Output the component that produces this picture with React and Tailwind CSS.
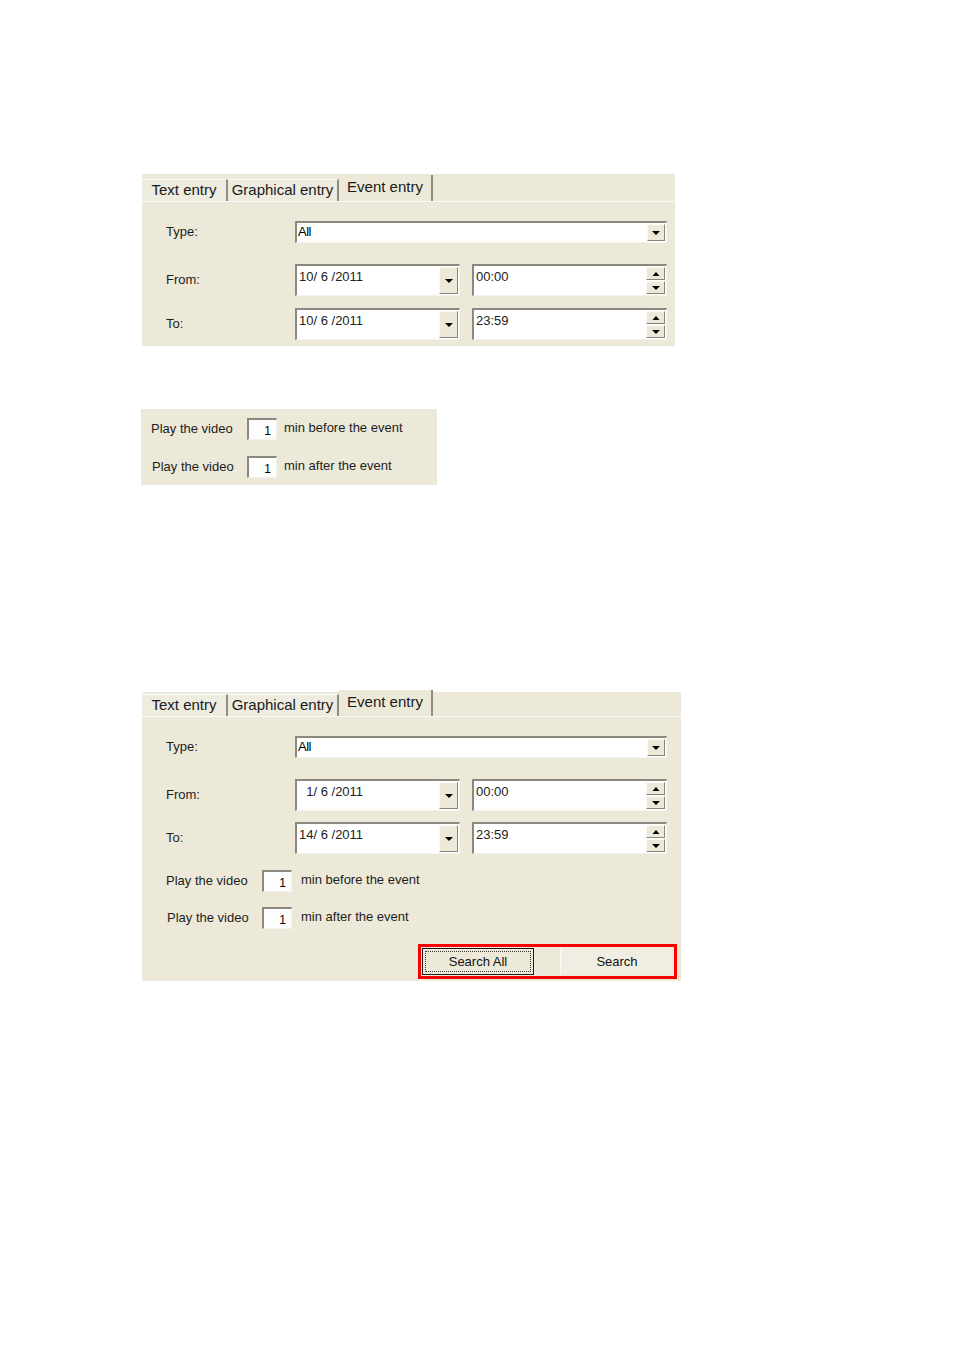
import React from 'react';

const font = { fontFamily: '"Liberation Sans", Arial, sans-serif' };

const Arrow = ({ up = false }) => (
    <svg width="8" height="4" viewBox="0 0 8 4" className="block">
        {up ? <polygon points="0.5,4 7.5,4 4,0" fill="#000" /> : <polygon points="0,0 8,0 4,4" fill="#000" />}
    </svg>
);

// raised little button, XP classic look
const RaisedBtn = ({ children, className = '' }) => (
    <div className={`flex items-center justify-center bg-[#ECE9D8] border border-t-[#fbfaf6] border-l-[#fbfaf6] border-b-[#85837a] border-r-[#85837a] ${className}`}>
        {children}
    </div>
);

const Sunken = ({ children, className = '' }) => (
    <div className={`flex bg-white border-t-2 border-l-2 border-b border-r border-t-[#8b897f] border-l-[#8b897f] border-b-[#f3f2ec] border-r-[#f3f2ec] ${className}`}>
        {children}
    </div>
);

const TypeCombo = () => (
    <Sunken className="w-[372px] h-[22px] items-stretch">
        <span className="flex-1 pl-[1px] text-[13px] leading-[18px] text-black tracking-[-0.5px]">All</span>
        <RaisedBtn className="w-[18px] my-[1px] mr-[1px]"><Arrow /></RaisedBtn>
    </Sunken>
);

const DateCombo = ({ value }) => (
    <Sunken className="w-[165px] h-[32px] items-stretch">
        <span className="flex-1 pl-[2px] pt-[3px] whitespace-pre text-[13px] leading-[16px] text-[#222]">{value}</span>
        <RaisedBtn className="w-[19px] my-[1px] mr-[1px]"><Arrow /></RaisedBtn>
    </Sunken>
);

const TimeSpin = ({ value }) => (
    <Sunken className="w-[195px] h-[32px] items-stretch">
        <span className="flex-1 pl-[2px] pt-[3px] text-[13px] leading-[16px] text-[#222]">{value}</span>
        <div className="flex flex-col w-[19px] mr-[1px] pt-[1px] gap-[1px]">
            <RaisedBtn className="h-[13px]"><Arrow up /></RaisedBtn>
            <RaisedBtn className="h-[13px]"><Arrow /></RaisedBtn>
        </div>
    </Sunken>
);

const NumBox = () => (
    <div className="w-[30px] h-[22px] bg-[#fdfdfd] border-t-2 border-l-2 border-t-[#8b897f] border-l-[#8b897f] border-b border-r border-b-[#f3f2ec] border-r-[#f3f2ec] flex items-end justify-end pr-[5px] pb-[1px] text-[12px] leading-[14px] text-black">
        1
    </div>
);

const PlayRow = ({ textGap, label, text, nudge = false }) => (
    <div className="flex items-center h-[22px] text-[13px] text-[#1d1d1d]">
        <span className={`w-[96px] shrink-0 ${nudge ? 'pl-[1px]' : ''}`}>{label}</span>
        <NumBox />
        <span style={{ marginLeft: textGap }} className="-mt-[2px]">{text}</span>
    </div>
);

const Tab = ({ children, active, w }) => (
    <div
        style={{ width: w }}
        className={`flex items-center justify-center border-r-2 border-r-[#8f8d86] text-[15px] text-[#1a1a1a] ${
            active ? 'h-[26px] bg-[#ECE9D8] pb-[2px]' : 'h-[22px] bg-[#EEEBDF] border-t border-t-[#fbfaf5]'
        }`}
    >
        {children}
    </div>
);

const TabStrip = ({ h }) => (
    <div style={{ height: h }} className="flex items-end">
        <Tab w={86}>Text entry</Tab>
        <Tab w={111}>Graphical entry</Tab>
        <Tab w={94} active>Event entry</Tab>
    </div>
);

const Label = ({ children }) => (
    <span className="w-[129px] shrink-0 text-[13px] text-[#1d1d1d]">{children}</span>
);

const FieldRows = ({ from, to, gapA, gapB }) => (
    <>
        <div className="flex items-center">
            <Label>Type:</Label>
            <TypeCombo />
        </div>
        <div className="flex items-center" style={{ marginTop: gapA }}>
            <Label>From:</Label>
            <div className="flex gap-[12px]">
                <DateCombo value={from} />
                <TimeSpin value="00:00" />
            </div>
        </div>
        <div className="flex items-center" style={{ marginTop: gapB }}>
            <Label>To:</Label>
            <div className="flex gap-[12px]">
                <DateCombo value={to} />
                <TimeSpin value="23:59" />
            </div>
        </div>
    </>
);

export default function App() {
    return (
        <div style={font} className="w-[955px] h-[1350px] bg-white flex flex-col">
            {/* first panel */}
            <div className="ml-[142px] mt-[174px] w-[533px] h-[172px] bg-[#ECE9D8] flex flex-col">
                <TabStrip h={27} />
                <div className="flex-1 border-t border-t-[#fbfaf5] pl-[24px] pt-[19px] flex flex-col">
                    <FieldRows from="10/ 6 /2011" to="10/ 6 /2011" gapA={21} gapB={12} />
                </div>
            </div>

            {/* small play panel */}
            <div className="ml-[141px] mt-[63px] w-[296px] h-[76px] bg-[#ECE9D8] pl-[10px] pt-[9px] flex flex-col gap-[16px]">
                <PlayRow textGap={7} label="Play the video" text="min before the event" />
                <PlayRow textGap={7} label="Play the video" text="min after the event" nudge />
            </div>

            {/* second full panel */}
            <div className="ml-[142px] mt-[207px] w-[539px] h-[289px] bg-[#ECE9D8] flex flex-col">
                <TabStrip h={24} />
                <div className="flex-1 border-t border-t-[#fbfaf5] pl-[24px] pt-[19px] flex flex-col">
                    <FieldRows from="  1/ 6 /2011" to="14/ 6 /2011" gapA={21} gapB={11} />
                    <div className="mt-[16px] flex flex-col gap-[15px]">
                        <PlayRow textGap={9} label="Play the video" text="min before the event" />
                        <PlayRow textGap={9} label="Play the video" text="min after the event" nudge />
                    </div>
                    <div className="mt-[15px] ml-[252px] w-[259px] h-[35px] border-[3px] border-[#ff0000] flex items-stretch p-[1px]">
                        <div className="w-[112px] border border-[#1c1c1c] bg-[#ECE9D8] p-[2px]">
                            <div className="h-full border border-dotted border-[#333] flex items-center justify-center text-[13px] text-[#111]">
                                Search All
                            </div>
                        </div>
                        <div className="ml-[26px] flex-1 bg-[#F0EEE3] border-l border-l-[#fbfaf5] flex items-center justify-center text-[13px] text-[#111]">
                            Search
                        </div>
                    </div>
                </div>
            </div>
        </div>
    );
}
